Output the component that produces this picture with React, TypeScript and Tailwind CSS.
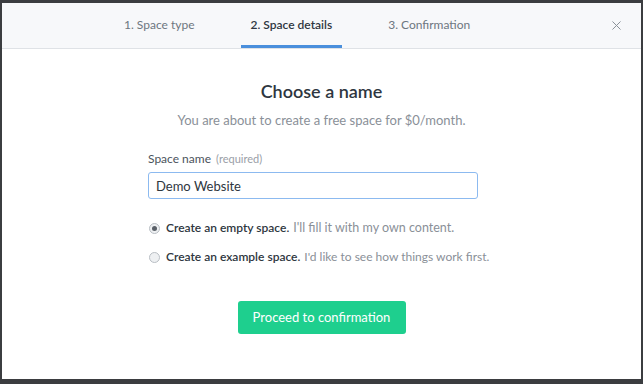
import { X } from "lucide-react";

const tabs = [
  { label: "1. Space type", active: false },
  { label: "2. Space details", active: true },
  { label: "3. Confirmation", active: false },
];

export default function App() {
  return (
    <div
      className="h-[384px] w-[643px] bg-[#3b3d40] pt-[3px] px-[2px] pb-[5px]"
      style={{ fontFamily: "Lato, 'Open Sans', sans-serif" }}
    >
      <div className="flex h-full flex-col bg-white">
        {/* header with steps */}
        <div className="flex h-[46px] items-stretch border-b border-[#dfe2e6] bg-[#f7f8fa]">
          <div className="ml-[112px] flex gap-[36px]">
            {tabs.map((t) => (
              <div
                key={t.label}
                className={`flex items-center px-[10px] pt-[1px] text-[12px] ${
                  t.active
                    ? "border-b-[3px] border-[#4a8fdc] font-semibold text-[#2e3640]"
                    : "border-b-[3px] border-transparent text-[#6d7680]"
                }`}
              >
                {t.label}
              </div>
            ))}
          </div>
          <button className="ml-auto mr-[17px] flex items-center text-[#8a9199]">
            <X size={15} strokeWidth={1.6} />
          </button>
        </div>

        {/* body */}
        <div className="flex flex-col items-center pt-[30px]">
          <h1 className="text-[18px] font-semibold leading-[24px] text-[#2e3640]">Choose a name</h1>
          <p className="mt-[8px] text-[13px] leading-[18px] text-[#8a9098]">
            You are about to create a free space for $0/month.
          </p>

          <div className="mt-[22px] w-[347px]">
            <label className="block text-[12px] leading-[16px] text-[#4b535c]">
              Space name <span className="ml-[2px] text-[11px] text-[#9aa0a7]">(required)</span>
            </label>
            <input
              defaultValue="Demo Website"
              className="mt-[5px] h-[27px] w-[330px] rounded-[3px] border border-[#8cbaf0] px-[7px] text-[13px] text-[#2e3640] outline-none"
            />

            <div className="mt-[20px] flex flex-col gap-[11px] pl-[1px]">
              <label className="flex items-center gap-[6px] whitespace-nowrap text-[12.5px] leading-[18px]">
                <span className="flex h-[11px] w-[11px] shrink-0 items-center justify-center rounded-full border border-[#b9bec4] bg-[#eef0f2]">
                  <span className="h-[5px] w-[5px] rounded-full bg-[#5a6068]" />
                </span>
                <span className="text-[12px] font-semibold text-[#2e3640]">Create an empty space.</span>
                <span className="-ml-[2px] text-[#8a9098]">I'll fill it with my own content.</span>
              </label>
              <label className="flex items-center gap-[6px] whitespace-nowrap text-[12.5px] leading-[18px]">
                <span className="h-[11px] w-[11px] shrink-0 rounded-full border border-[#b9bec4] bg-[#eef0f2]" />
                <span className="text-[12px] font-semibold text-[#2e3640]">Create an example space.</span>
                <span className="-ml-[2px] text-[12px] text-[#8a9098]">I'd like to see how things work first.</span>
              </label>
            </div>
          </div>

          <button className="mt-[35px] h-[33px] w-[168px] rounded-[3px] bg-[#1ecf8e] text-[13px] text-white">
            Proceed to confirmation
          </button>
        </div>
      </div>
    </div>
  );
}
